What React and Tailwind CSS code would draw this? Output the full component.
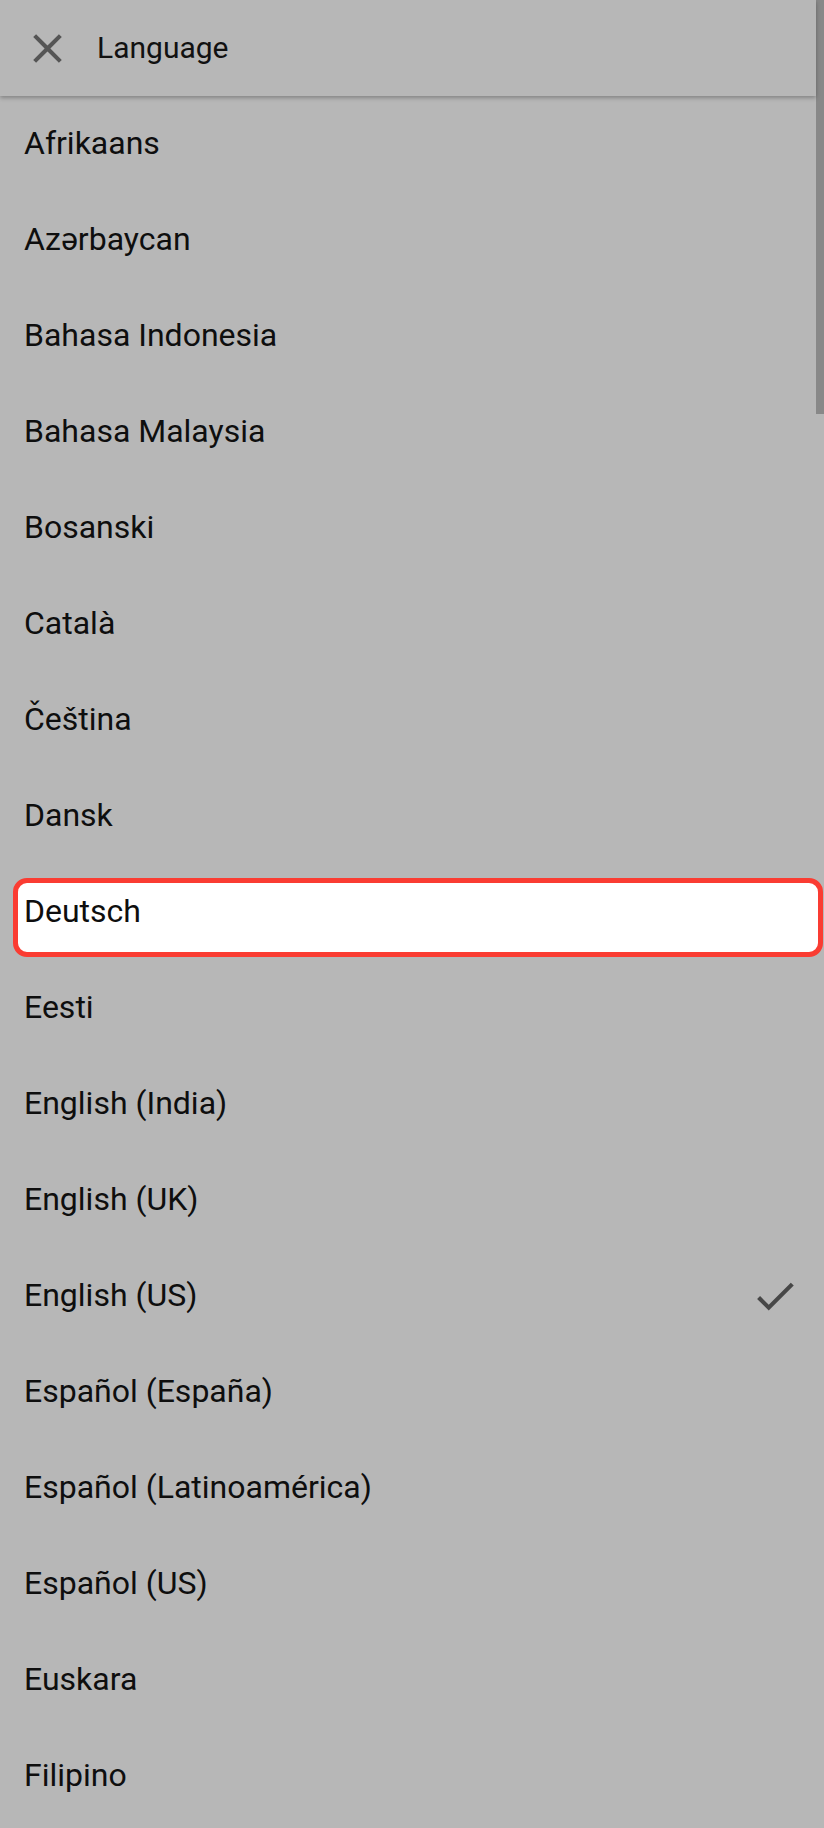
import React from "react";

const LANGUAGES = [
  "Afrikaans",
  "Azərbaycan",
  "Bahasa Indonesia",
  "Bahasa Malaysia",
  "Bosanski",
  "Català",
  "Čeština",
  "Dansk",
  "Deutsch",
  "Eesti",
  "English (India)",
  "English (UK)",
  "English (US)",
  "Español (España)",
  "Español (Latinoamérica)",
  "Español (US)",
  "Euskara",
  "Filipino",
];

const SELECTED = "English (US)";
const FOCUSED = "Deutsch";

function CloseIcon() {
  return (
    <svg viewBox="0 0 24 24" className="w-[49px] h-[49px]" fill="#555555">
      <path d="M19 6.41L17.59 5 12 10.59 6.41 5 5 6.41 10.59 12 5 17.59 6.41 19 12 13.41 17.59 19 19 17.59 13.41 12z" />
    </svg>
  );
}

function CheckIcon() {
  return (
    <svg viewBox="0 0 24 24" className="w-[50px] h-[50px]" fill="#474747">
      <path d="M9 16.17L4.83 12l-1.42 1.41L9 19 21 7l-1.41-1.41z" />
    </svg>
  );
}

function LanguageRow({ name }) {
  const focused = name === FOCUSED;
  return (
    <li className="relative h-[96px] flex items-center pl-[24px] pr-[16px]">
      {focused && (
        <div className="absolute left-[13px] right-[-7px] top-[14px] h-[79px] rounded-[14px] border-[5px] border-[#fa3c32] bg-white" />
      )}
      <span className="relative flex-1 pb-[3px] text-[32px] leading-none text-[#0e0e0e]">{name}</span>
      {name === SELECTED && (
        <span className="relative flex items-center">
          <CheckIcon />
        </span>
      )}
    </li>
  );
}

export default function App() {
  return (
    <div
      className="w-[824px] h-[1828px] overflow-hidden bg-[#b7b7b7] flex"
      style={{ fontFamily: "Roboto, 'Noto Sans', sans-serif" }}
    >
      <div className="flex-1 flex flex-col min-w-0">
        <header className="relative z-10 h-[96px] shrink-0 flex items-center pl-[23px] bg-[#b7b7b7] shadow-[0_2px_4px_rgba(0,0,0,0.28)]">
          <CloseIcon />
          <h1 className="ml-[25px] text-[30px] leading-none text-[#111111]">Language</h1>
        </header>
        <ul className="flex flex-col">
          {LANGUAGES.map((name) => (
            <LanguageRow key={name} name={name} />
          ))}
        </ul>
      </div>
      <div className="w-[8px] shrink-0 h-[414px] bg-[#888888]" />
    </div>
  );
}
